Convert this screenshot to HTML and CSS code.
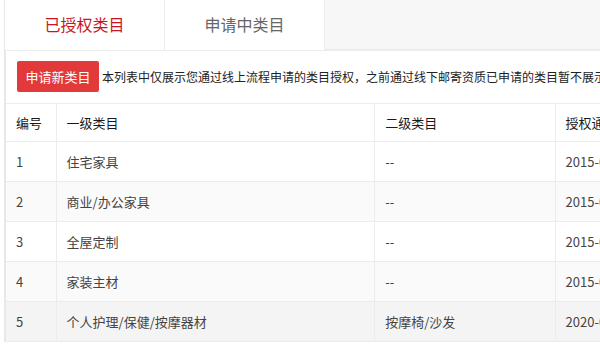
FILE: index.html
```html
<!DOCTYPE html>
<html lang="zh-CN">
<head>
<meta charset="utf-8">
<title>类目管理</title>
<link rel="stylesheet" href="styles.css">
</head>
<body>
<div class="page">
  <div class="tabs">
    <div class="tab active">已授权类目</div>
    <div class="tab">申请中类目</div>
    <div class="tab-fill"></div>
  </div>
  <div class="panel">
    <div class="toolbar">
      <button class="btn">申请新类目</button>
      <span class="notice">本列表中仅展示您通过线上流程申请的类目授权，之前通过线下邮寄资质已申请的类目暂不展示</span>
    </div>
    <table class="grid">
      <colgroup>
        <col class="c1"><col class="c2"><col class="c3"><col class="c4">
      </colgroup>
      <thead>
        <tr><th>编号</th><th>一级类目</th><th>二级类目</th><th>授权通过时间</th></tr>
      </thead>
      <tbody>
        <tr><td>1</td><td>住宅家具</td><td>--</td><td>2015-06-25</td></tr>
        <tr class="alt"><td>2</td><td>商业/办公家具</td><td>--</td><td>2015-06-25</td></tr>
        <tr><td>3</td><td>全屋定制</td><td>--</td><td>2015-06-25</td></tr>
        <tr class="alt"><td>4</td><td>家装主材</td><td>--</td><td>2015-06-25</td></tr>
        <tr class="hover"><td>5</td><td>个人护理/保健/按摩器材</td><td>按摩椅/沙发</td><td>2020-03-12</td></tr>
      </tbody>
    </table>
  </div>
</div>
</body>
</html>
```
FILE: styles.css
```css
html, body {
  margin: 0;
  padding: 0;
  background: #fff;
  overflow: hidden;
}
body {
  width: 600px;
  height: 346px;
  font-family: "Noto Sans CJK SC", "Noto Sans", sans-serif;
  color: #333;
}
.page {
  margin-left: 4px;
  border-left: 1px solid #e8e8e8;
  width: 760px;
}
.tabs {
  display: flex;
  height: 50px;
}
.tab {
  width: 160px;
  height: 50px;
  border-right: 1px solid #ececec;
  background: #fff;
  display: flex;
  align-items: center;
  justify-content: center;
  font-size: 16px;
  color: #666;
  line-height: 1;
  padding-bottom: 2px;
  box-sizing: border-box;
}
.tab.active {
  color: #c81623;
}
.tab-fill {
  flex: 1;
  height: 49px;
  background: #f7f7f7;
  border-bottom: 1px solid #ececec;
}
.panel {
  border-left: 1px solid #e8e8e8;
  border-top: 1px solid #ececec;
}
.toolbar {
  display: flex;
  align-items: center;
  gap: 3px;
  padding: 10px 11px 11px;
  white-space: nowrap;
}
.btn {
  flex: none;
  width: 82px;
  height: 31px;
  border: 0;
  border-radius: 2px;
  background: #e23a3b;
  color: #fff;
  font-family: inherit;
  font-size: 13px;
  line-height: 1;
  padding: 0;
}
.notice {
  font-size: 12px;
  line-height: 1;
  color: #222;
}
.grid {
  border-collapse: collapse;
  table-layout: fixed;
  width: 750px;
  font-size: 13px;
}
.c1 { width: 50px; }
.c2 { width: 318px; }
.c3 { width: 180px; }
.c4 { width: 200px; }
.grid th, .grid td {
  text-align: left;
  padding: 0 10px;
  border: 1px solid #ececec;
  white-space: nowrap;
  overflow: hidden;
  line-height: 1;
}
.grid tr > :first-child { border-left: 0; }
.grid th {
  height: 37px;
  font-weight: normal;
  color: #1a1a1a;
}
.grid td {
  height: 39px;
  color: #444;
}
.grid tr.alt td { background: #fafafa; }
.grid tr.hover td { background: #f4f4f4; }
```
